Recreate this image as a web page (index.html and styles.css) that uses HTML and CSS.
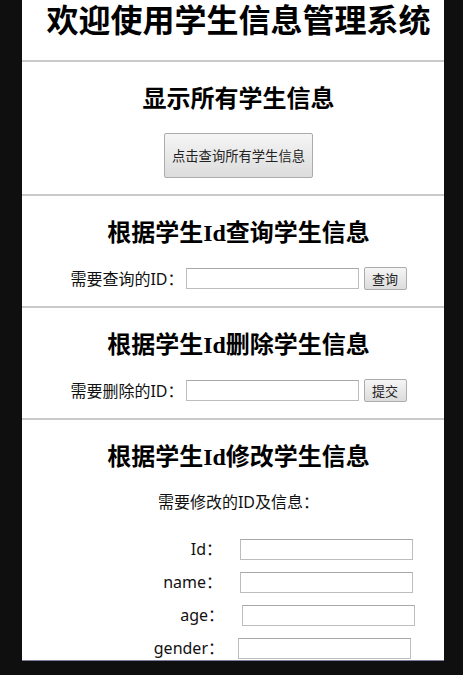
FILE: index.html
```html
<!DOCTYPE html>
<html lang="zh-CN">
<head>
<meta charset="utf-8">
<title>学生信息管理系统</title>
<link rel="stylesheet" href="styles.css">
</head>
<body>
<div class="page">
  <header class="top">
    <h1 class="title">欢迎使用学生信息管理系统</h1>
  </header>

  <section class="block">
    <h2 class="block-title">显示所有学生信息</h2>
    <div class="actions">
      <button class="btn btn-lg" type="button">点击查询所有学生信息</button>
    </div>
  </section>

  <section class="block">
    <h2 class="block-title">根据学生Id查询学生信息</h2>
    <form class="row">
      <label class="row-label" for="qid">需要查询的ID：</label>
      <input class="field" id="qid" type="text">
      <button class="btn btn-sm" type="button">查询</button>
    </form>
  </section>

  <section class="block">
    <h2 class="block-title">根据学生Id删除学生信息</h2>
    <form class="row">
      <label class="row-label" for="did">需要删除的ID：</label>
      <input class="field" id="did" type="text">
      <button class="btn btn-sm" type="button">提交</button>
    </form>
  </section>

  <section class="block block-last">
    <h2 class="block-title">根据学生Id修改学生信息</h2>
    <p class="hint">需要修改的ID及信息：</p>
    <form class="fields">
      <label class="f-label" for="mid">Id：</label>
      <input class="field" id="mid" type="text">
      <label class="f-label" for="mname">name：</label>
      <input class="field" id="mname" type="text">
      <label class="f-label f-shift" for="mage">age：</label>
      <input class="field f-shift" id="mage" type="text">
      <label class="f-label f-shift" for="mgender">gender：</label>
      <input class="field f-back" id="mgender" type="text">
    </form>
  </section>
</div>
</body>
</html>
```

FILE: styles.css
```css
html, body {
  margin: 0;
  padding: 0;
}

body {
  background: #0f0f0f;
  font-family: "Noto Sans", "Noto Sans CJK SC", sans-serif;
  color: #111;
}

.page {
  width: 422px;
  height: 660px;
  margin-left: 22px;
  overflow: hidden;
  background: #ffffff;
  border-bottom: 1px solid #7d7d9c;
  box-shadow: 0 1px 0 #3e3e52;
}

.top {
  box-sizing: border-box;
  height: 60px;
  padding: 1px 0 0 11px;
  text-align: center;
}

.title {
  margin: 0;
  font-family: "Liberation Sans", "Noto Sans CJK SC", sans-serif;
  font-size: 32px;
  line-height: 40px;
  font-weight: 700;
  color: #000;
}

.block {
  border-top: 2px solid #cacaca;
  padding: 22px 0 16px 11px;
  text-align: center;
}

.block-title {
  margin: 0;
  font-family: "Liberation Serif", "Noto Sans CJK SC", serif;
  font-size: 24px;
  line-height: 30px;
  font-weight: 700;
  color: #000;
}

.actions {
  margin-top: 19px;
  display: flex;
  justify-content: center;
}

.btn {
  box-sizing: border-box;
  padding: 0;
  font-family: "Noto Sans CJK SC", sans-serif;
  color: #222;
  background: linear-gradient(#f5f5f5, #dcdcdc);
  border: 1px solid #acacac;
  border-radius: 2px;
}

.btn-lg {
  width: 149px;
  height: 45px;
  font-size: 13.3px;
}

.btn-sm {
  width: 43px;
  height: 23px;
  font-size: 13px;
  line-height: 19px;
}

.row {
  margin: 19px 0 0;
  height: 23px;
  display: flex;
  justify-content: center;
  align-items: center;
}

.row-label {
  font-size: 16px;
  line-height: 20px;
  margin-right: 2px;
}

.field {
  box-sizing: border-box;
  width: 173px;
  height: 21px;
  margin: 0;
  border: 1px solid #bdbdbd;
  border-top-color: #a8a8a8;
  background: #fff;
}

.row .field {
  margin-right: 5px;
}

.hint {
  margin: 20px 0 0;
  font-size: 16px;
  line-height: 20px;
}

.fields {
  margin: 27px 0 0 -11px;
  display: grid;
  grid-template-columns: 200px 173px;
  column-gap: 18px;
  row-gap: 12px;
  align-items: center;
}

.f-label {
  text-align: right;
  font-size: 16px;
  line-height: 21px;
}

.f-shift {
  position: relative;
  left: 2px;
}

.f-back {
  position: relative;
  left: -2px;
}
```
